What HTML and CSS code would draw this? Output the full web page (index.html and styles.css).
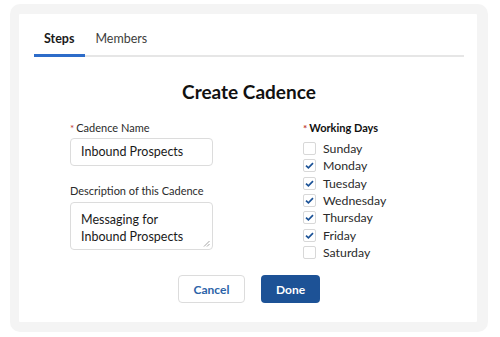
FILE: index.html
```html
<!DOCTYPE html>
<html>
<head>
<meta charset="utf-8">
<link rel="stylesheet" href="styles.css">
</head>
<body>
<div class="frame">
  <div class="card">
    <div class="tabs">
      <div class="tab active">Steps</div>
      <div class="tab">Members</div>
    </div>
    <h1 class="title">Create Cadence</h1>
    <div class="form">
      <div class="col-left">
        <div class="label"><span class="req">*</span>Cadence Name</div>
        <div class="input">Inbound Prospects</div>
        <div class="label label-desc">Description of this Cadence</div>
        <div class="textarea">Messaging for<br>Inbound Prospects
          <svg class="grip" width="7" height="7" viewBox="0 0 7 7"><path d="M6.5 1 L1 6.5 M6.5 4 L4 6.5" stroke="#9a9a9a" stroke-width="0.9" fill="none"/></svg>
        </div>
      </div>
      <div class="col-right">
        <div class="label label-bold"><span class="req">*</span>Working Days</div>
        <div class="days">
          <div class="day"><span class="box"></span>Sunday</div>
          <div class="day"><span class="box checked"><svg width="9" height="7" viewBox="0 0 9 7"><path d="M1 3.6 L3.4 5.8 L8 1.2" stroke="#1b5297" stroke-width="1.7" fill="none"/></svg></span>Monday</div>
          <div class="day"><span class="box checked"><svg width="9" height="7" viewBox="0 0 9 7"><path d="M1 3.6 L3.4 5.8 L8 1.2" stroke="#1b5297" stroke-width="1.7" fill="none"/></svg></span>Tuesday</div>
          <div class="day"><span class="box checked"><svg width="9" height="7" viewBox="0 0 9 7"><path d="M1 3.6 L3.4 5.8 L8 1.2" stroke="#1b5297" stroke-width="1.7" fill="none"/></svg></span>Wednesday</div>
          <div class="day"><span class="box checked"><svg width="9" height="7" viewBox="0 0 9 7"><path d="M1 3.6 L3.4 5.8 L8 1.2" stroke="#1b5297" stroke-width="1.7" fill="none"/></svg></span>Thursday</div>
          <div class="day"><span class="box checked"><svg width="9" height="7" viewBox="0 0 9 7"><path d="M1 3.6 L3.4 5.8 L8 1.2" stroke="#1b5297" stroke-width="1.7" fill="none"/></svg></span>Friday</div>
          <div class="day"><span class="box"></span>Saturday</div>
        </div>
      </div>
    </div>
    <div class="buttons">
      <div class="btn btn-cancel">Cancel</div>
      <div class="btn btn-done">Done</div>
    </div>
  </div>
</div>
</body>
</html>
```
FILE: styles.css
```css
* { box-sizing: border-box; }
html, body { margin: 0; padding: 0; background: #fff; }
body { font-family: Lato, "Open Sans", sans-serif; color: #1a1a1a; }

.frame {
  margin: 4px 0 0 10px;
  width: 478px;
  height: 328px;
  background: #f4f4f4;
  border-radius: 10px;
  padding: 10px 11px 10px 9px;
}
.card {
  background: #fff;
  height: 308px;
  padding: 15px 13px 0 15px;
  border-radius: 1px;
}
.tabs {
  display: flex;
  border-bottom: 2px solid #e6e6e6;
}
.tab {
  font-size: 12.5px;
  line-height: 20px;
  padding: 0 11px 5px 10px;
  margin-bottom: -2px;
  border-bottom: 3px solid transparent;
  color: #3e3e3c;
}
.tab.active {
  font-weight: 700;
  color: #1a1a1a;
  border-bottom-color: #2d6cc9;
}
.title {
  margin: 23px 0 0;
  font-size: 19px;
  line-height: 24px;
  font-weight: 700;
  text-align: center;
  color: #111;
}
.form {
  display: flex;
  margin-top: 17px;
}
.col-left {
  width: 143px;
  margin-left: 36px;
}
.col-right {
  margin-left: 90px;
}
.label {
  font-size: 11px;
  line-height: 14px;
  color: #2b2b2b;
}
.label-bold { font-weight: 700; color: #111; }
.req {
  color: #c23934;
  margin-right: 2px;
  font-size: 10px;
}
.input {
  margin-top: 3px;
  height: 28px;
  border: 1px solid #dcdcdc;
  border-radius: 4px;
  padding: 0 10px;
  font-size: 12.5px;
  line-height: 26px;
  color: #1a1a1a;
}
.label-desc { margin-top: 18px; }
.textarea {
  position: relative;
  margin-top: 4px;
  height: 48px;
  border: 1px solid #dcdcdc;
  border-radius: 4px;
  padding: 8px 10px 0;
  font-size: 12.5px;
  line-height: 17px;
  color: #1a1a1a;
}
.grip {
  position: absolute;
  right: 2px;
  bottom: 2px;
}
.days { margin-top: 5px; }
.day {
  display: flex;
  align-items: center;
  height: 17.3px;
  font-size: 12.3px;
  color: #2b2b2b;
}
.box {
  width: 13px;
  height: 13px;
  border: 1px solid #d8d8d8;
  border-radius: 2px;
  margin-right: 7px;
  display: flex;
  align-items: center;
  justify-content: center;
  background: #fff;
}
.buttons {
  display: flex;
  justify-content: center;
  gap: 16px;
  margin-top: 14px;
}
.btn {
  height: 28px;
  border-radius: 4px;
  font-size: 12px;
  font-weight: 700;
  display: flex;
  align-items: center;
  justify-content: center;
}
.btn-cancel {
  width: 67px;
  border: 1px solid #dcdcdc;
  color: #2c63a8;
  background: #fff;
}
.btn-done {
  width: 59px;
  background: #1d5296;
  color: #fff;
}
```
